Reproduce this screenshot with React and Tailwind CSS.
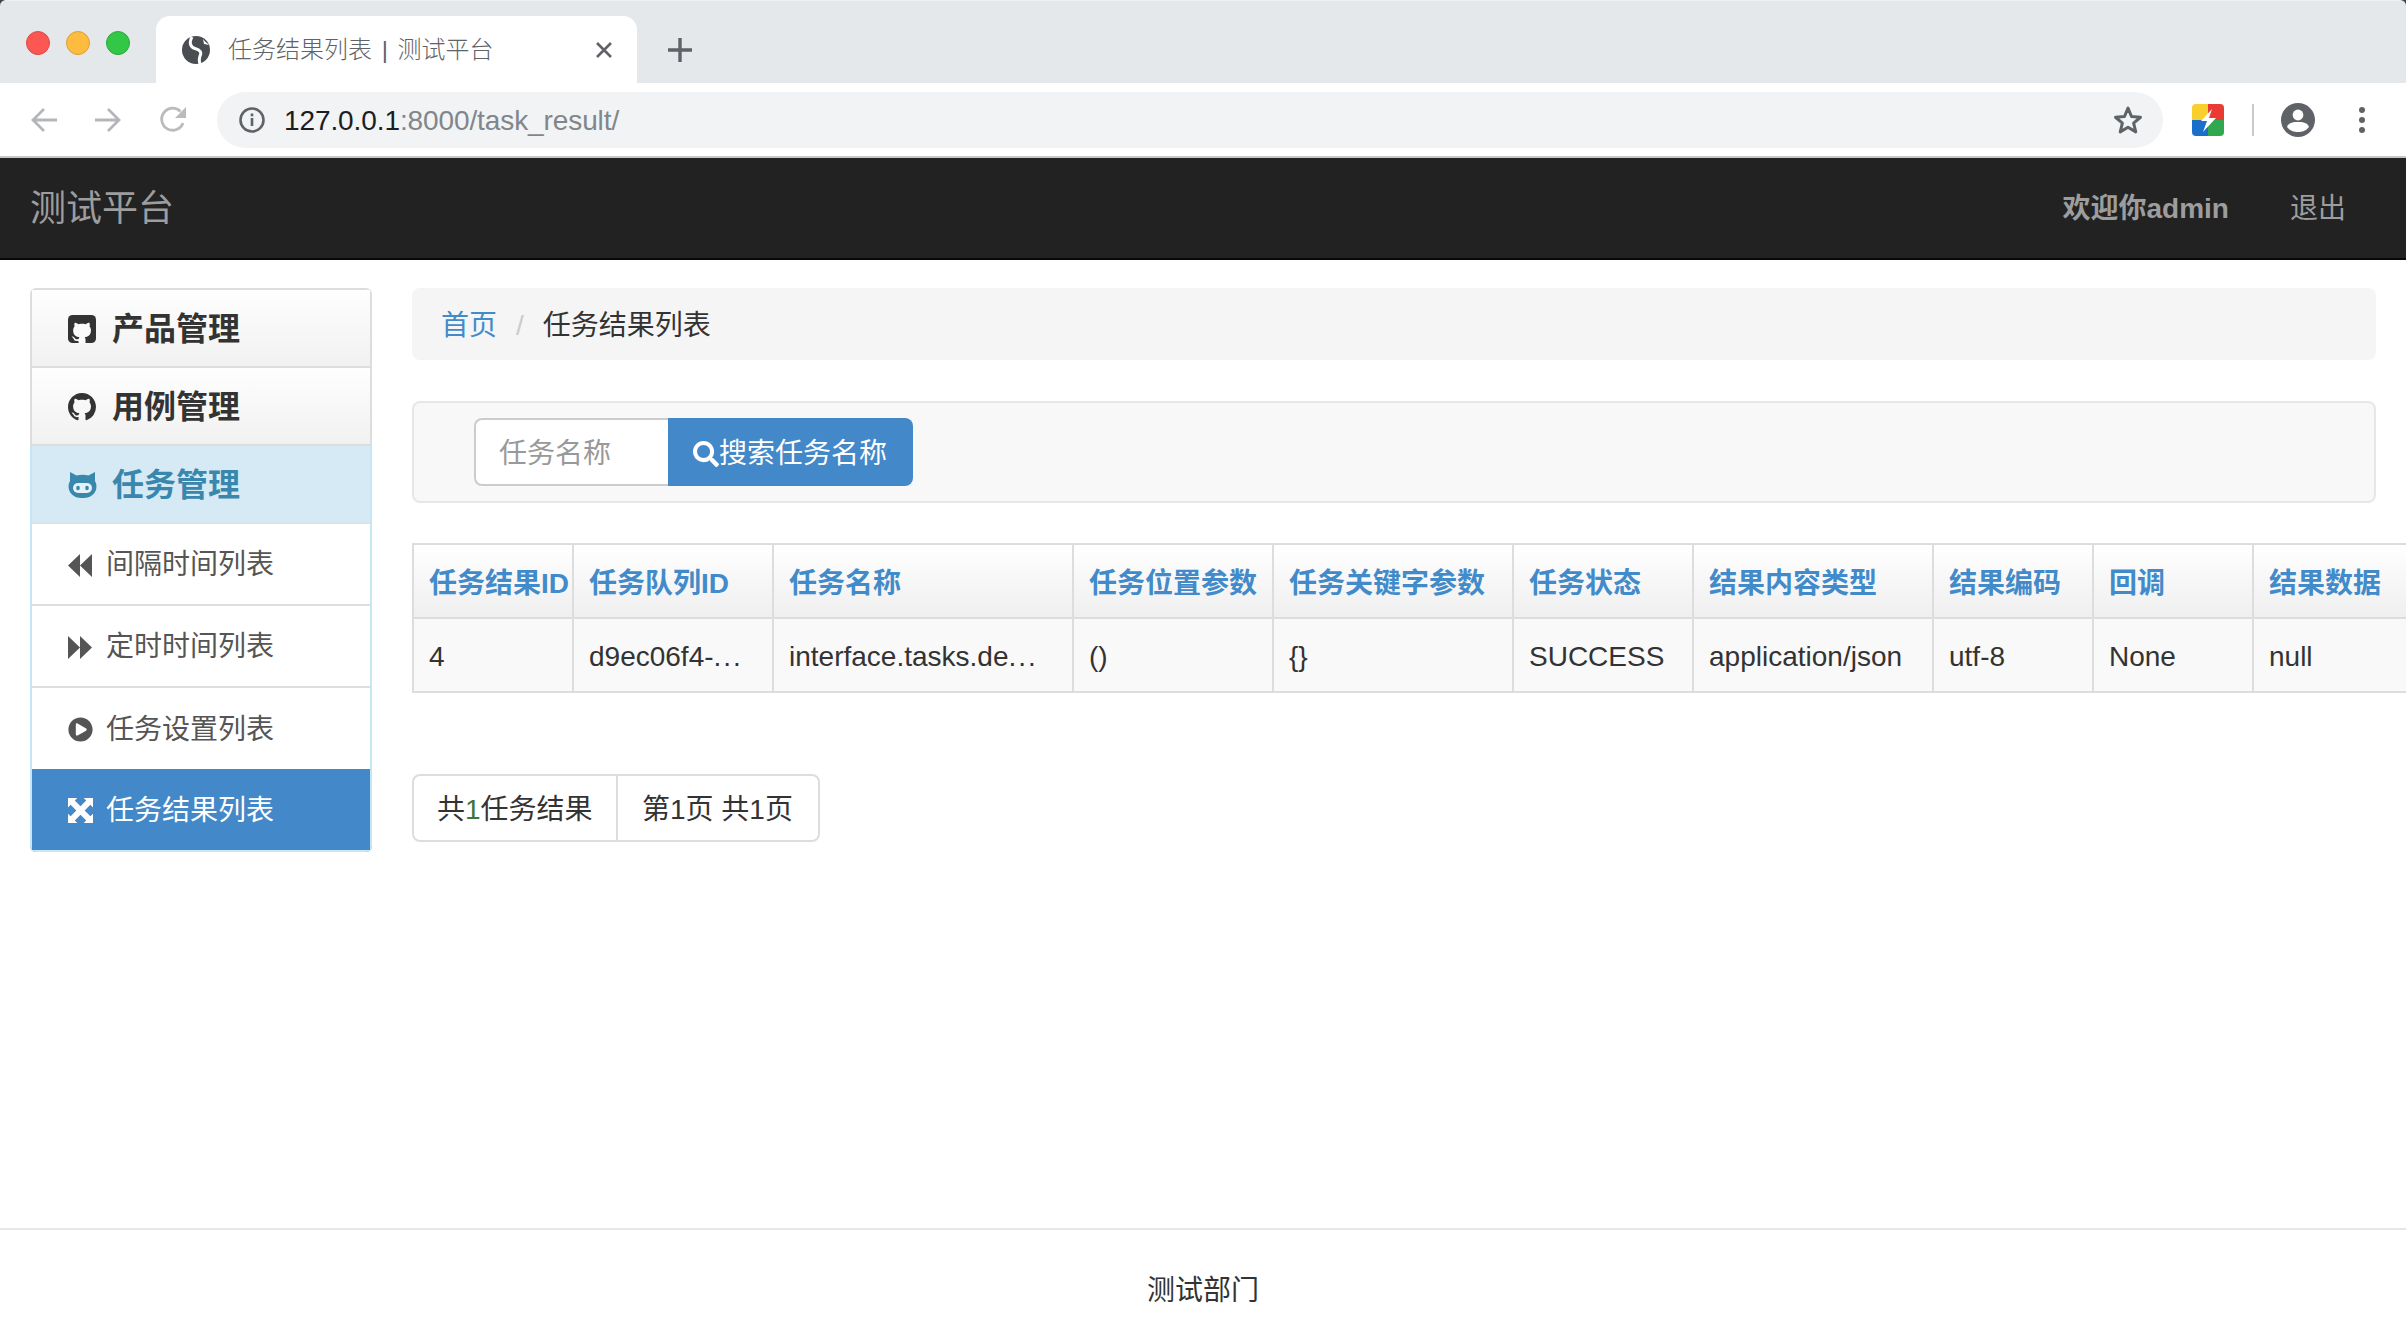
import React from "react";
import { FaPlayCircle, FaSearch } from "react-icons/fa";

const MARK = "M8 0C3.58 0 0 3.58 0 8c0 3.54 2.29 6.53 5.47 7.59.4.07.55-.17.55-.38 0-.19-.01-.82-.01-1.49-2.01.37-2.53-.49-2.69-.94-.09-.23-.48-.94-.82-1.13-.28-.15-.68-.52-.01-.53.63-.01 1.08.58 1.23.82.72 1.21 1.87.87 2.33.66.07-.52.28-.87.51-1.07-1.78-.2-3.64-.89-3.64-3.95 0-.87.31-1.59.82-2.15-.08-.2-.36-1.02.08-2.12 0 0 .67-.21 2.2.82.64-.18 1.32-.27 2-.27.68 0 1.36.09 2 .27 1.53-1.04 2.2-.82 2.2-.82.44 1.1.16 1.92.08 2.12.51.56.82 1.28.82 2.15 0 3.07-1.87 3.75-3.65 3.95.29.25.54.73.54 1.48 0 1.07-.01 1.93-.01 2.2 0 .21.15.46.55.38A8.013 8.013 0 0016 8c0-4.42-3.58-8-8-8z";
const CAT = "M6.02 16v-1.17c-2.01.37-2.53-.49-2.69-.94-.09-.23-.48-.94-.82-1.13-.28-.15-.68-.52-.01-.53.63-.01 1.08.58 1.23.82.72 1.21 1.87.87 2.33.66.07-.52.28-.87.51-1.07-1.78-.2-3.64-.89-3.64-3.95 0-.87.31-1.59.82-2.15-.08-.2-.36-1.02.08-2.12 0 0 .67-.21 2.2.82.64-.18 1.32-.27 2-.27.68 0 1.36.09 2 .27 1.53-1.04 2.2-.82 2.2-.82.44 1.1.16 1.92.08 2.12.51.56.82 1.28.82 2.15 0 3.07-1.87 3.75-3.65 3.95.29.25.54.73.54 1.48 0 1.07-.01 1.93-.01 2.2V16z";

function GithubSquare() {
  return (
    <svg viewBox="0 0 16 16" className="w-[28px] h-[28px]">
      <rect width="16" height="16" rx="2.6" fill="currentColor" />
      <path d={CAT} fill="#fbfbfb" />
    </svg>
  );
}

function GithubMark() {
  return (
    <svg viewBox="0 0 16 16" className="w-[28px] h-[28px]" fill="currentColor">
      <path d={MARK} />
    </svg>
  );
}

function GithubAlt() {
  return (
    <svg viewBox="0 0 29 27" className="w-[29px] h-[27px]">
      <path d="M2 10 L2 1 L8.5 4.5 C12 3.5 17 3.5 20.5 4.5 L27 1 L27 10 C29 13 29 18 27 21 C24 26 19 27 14.5 27 C10 27 5 26 2 21 C0 18 0 13 2 10Z" fill="currentColor" />
      <rect x="5" y="12" width="19" height="10" rx="5" fill="#e3f1f9" />
      <ellipse cx="10" cy="17" rx="1.8" ry="2.3" fill="currentColor" />
      <ellipse cx="19" cy="17" rx="1.8" ry="2.3" fill="currentColor" />
    </svg>
  );
}

function Backward() {
  return (
    <svg viewBox="0 0 24 23" className="w-[24px] h-[23px]" fill="currentColor">
      <path d="M24 0 L12 11.5 L24 23Z M12 0 L0 11.5 L12 23Z" />
    </svg>
  );
}

function Forward() {
  return (
    <svg viewBox="0 0 24 23" className="w-[24px] h-[23px]" fill="currentColor">
      <path d="M0 0 L12 11.5 L0 23Z M12 0 L24 11.5 L12 23Z" />
    </svg>
  );
}

function Fullscreen() {
  return (
    <svg viewBox="0 0 24 24" className="w-[25px] h-[25px]" fill="currentColor">
      <path d="M0 0H9L6.5 2.5 12 8 17.5 2.5 15 0H24V9L21.5 6.5 16 12 21.5 17.5 24 15V24H15L17.5 21.5 12 16 6.5 21.5 9 24H0V15L2.5 17.5 8 12 2.5 6.5 0 9Z" />
    </svg>
  );
}

function Favicon() {
  return (
    <svg viewBox="0 0 28 28" className="w-[28px] h-[28px] shrink-0">
      <circle cx="14" cy="14" r="14" fill="#4a4d52" />
      <path d="M10 1 C7 6 8 11 13 12.5 C18 14 20 16 18 20 C17 23 17 25 18 28" fill="none" stroke="#fff" strokeWidth="3" />
      <path d="M21 3 C22 5 24 6 27 9 L22 8Z" fill="#fff" />
    </svg>
  );
}

function TabStrip() {
  return (
    <div className="h-[83px] bg-[#e5e8eb] flex items-end shrink-0 border-t border-[#eef0f2] rounded-t-[6px]">
      <div className="flex items-center gap-[16px] pl-[26px] h-[82px] pt-[2px]">
        <span className="w-[24px] h-[24px] rounded-full bg-[#fc5753] border border-[#df4744]" />
        <span className="w-[24px] h-[24px] rounded-full bg-[#fdbc40] border border-[#de9f34]" />
        <span className="w-[24px] h-[24px] rounded-full bg-[#33c748] border border-[#27aa35]" />
      </div>
      <div className="ml-[26px] w-[481px] h-[67px] bg-white rounded-t-[14px] flex items-center pl-[26px] relative">
        <Favicon />
        <span className="ml-[18px] text-[24px] leading-[28px] text-[#5f6368] font-light whitespace-nowrap [word-spacing:3px]">任务结果列表 | 测试平台</span>
        <svg viewBox="0 0 18 18" className="absolute left-[439px] top-[25px] w-[18px] h-[18px]" stroke="#5f6368" strokeWidth="2.6" fill="none">
          <path d="M2 2 L16 16 M16 2 L2 16" />
        </svg>
      </div>
      <div className="h-[67px] flex items-center ml-[31px]">
        <svg viewBox="0 0 24 24" className="w-[24px] h-[24px]" stroke="#5f6368" strokeWidth="3.4" fill="none">
          <path d="M12 0 V24 M0 12 H24" />
        </svg>
      </div>
    </div>
  );
}

function Toolbar() {
  return (
    <div className="h-[75px] bg-white flex items-center shrink-0 border-b-2 border-[#c6c6c6]">
      <div className="flex items-center pl-[31px] w-[217px] gap-[38px] shrink-0">
        <svg viewBox="0 0 26 26" className="w-[26px] h-[26px]" stroke="#b4b6b9" strokeWidth="2.8" fill="none">
          <path d="M26 13 H3 M13 2 L2 13 L13 24" />
        </svg>
        <svg viewBox="0 0 26 26" className="w-[26px] h-[26px]" stroke="#b4b6b9" strokeWidth="2.8" fill="none">
          <path d="M0 13 H23 M13 2 L24 13 L13 24" />
        </svg>
        <svg viewBox="0 0 28 28" className="w-[28px] h-[28px]" fill="none">
          <path d="M24 17 A11 11 0 1 1 21.5 5.5" stroke="#b9bbbe" strokeWidth="2.8" />
          <path d="M27 1 V12 H16Z" fill="#b9bbbe" />
        </svg>
      </div>
      <div className="w-[1946px] h-[56px] rounded-full bg-[#f1f3f4] flex items-center pl-[22px] pr-[20px] shrink-0">
        <svg viewBox="0 0 26 26" className="w-[26px] h-[26px] shrink-0" fill="none">
          <circle cx="13" cy="13" r="11.5" stroke="#5f6368" strokeWidth="2.6" />
          <rect x="11.7" y="11" width="2.6" height="8" fill="#5f6368" />
          <rect x="11.7" y="6.5" width="2.6" height="2.8" fill="#5f6368" />
        </svg>
        <span className="ml-[19px] mt-[2px] text-[28px] tracking-[-0.1px] whitespace-nowrap text-[#1c1d1f]">127.0.0.1<span className="text-[#80868b]">:8000/task_result/</span></span>
        <svg viewBox="0 0 24 24" className="w-[30px] h-[30px] ml-auto" fill="none" stroke="#5f6368" strokeWidth="2.4" strokeLinejoin="round">
          <path d="M12 2.5 L14.8 9.2 L22 9.8 L16.5 14.5 L18.2 21.5 L12 17.8 L5.8 21.5 L7.5 14.5 L2 9.8 L9.2 9.2Z" />
        </svg>
      </div>
      <svg viewBox="0 0 32 32" className="w-[32px] h-[32px] ml-[29px] shrink-0">
        <defs>
          <clipPath id="ext"><rect width="32" height="32" rx="4" /></clipPath>
        </defs>
        <g clipPath="url(#ext)">
          <rect width="16" height="16" fill="#f8cf2c" />
          <rect x="16" width="16" height="16" fill="#e93a33" />
          <rect y="16" width="16" height="16" fill="#1a6fc9" />
          <rect x="16" y="16" width="16" height="16" fill="#2fa84f" />
          <path d="M20 5 L9 17 H15 L11 28 L24 14 H17Z" fill="#fff" />
        </g>
      </svg>
      <div className="w-[2px] h-[32px] bg-[#c8cacc] ml-[28px] shrink-0" />
      <svg viewBox="0 0 34 34" className="w-[34px] h-[34px] ml-[27px] shrink-0">
        <circle cx="17" cy="17" r="17" fill="#5f6368" />
        <circle cx="17" cy="12" r="5.4" fill="#fff" />
        <path d="M6 24 C8 19 13 19 17 19 C21 19 26 19 28 24 C25 28 21 29 17 29 C13 29 9 28 6 24Z" fill="#fff" />
      </svg>
      <div className="flex flex-col gap-[4px] ml-[44px] shrink-0">
        <span className="w-[6px] h-[6px] rounded-full bg-[#5f6368]" />
        <span className="w-[6px] h-[6px] rounded-full bg-[#5f6368]" />
        <span className="w-[6px] h-[6px] rounded-full bg-[#5f6368]" />
      </div>
    </div>
  );
}

function Navbar() {
  return (
    <div className="h-[102px] bg-[#222222] border-b-2 border-[#080808] flex items-center justify-between pl-[30px] pr-[60px] pt-[1px] shrink-0">
      <span className="text-[36px] text-[#9d9d9d]">测试平台</span>
      <div className="flex items-center gap-[61px] text-[28px] text-[#9d9d9d]">
        <span className="font-bold">欢迎你admin</span>
        <span>退出</span>
      </div>
    </div>
  );
}

function Heading({ icon, children, active, first }) {
  const base = "h-[78px] flex items-center pl-[36px] pt-[1px] border-b-2 font-bold text-[32px] ";
  const tone = active
    ? "bg-[#d6eaf6] text-[#3a87ad] border-x-2 border-x-[#c5e6f4] border-b-[#d7e4ec]"
    : "bg-gradient-to-b from-[#fefefe] to-[#f1f1f1] text-[#333333] border-x-2 border-[#dddddd]";
  return (
    <div className={base + tone + (first ? " border-t-2 h-[80px]" : "")}>
      <span className="w-[44px] flex items-center">{icon}</span>
      {children}
    </div>
  );
}

function SubItem({ icon, children, active, last }) {
  const base = "flex items-center pl-[36px] pt-[2px] text-[28px] border-x-2 ";
  const tone = active
    ? "h-[83px] bg-[#4388c8] text-white border-x-[#c5e6f4] border-b-2 border-b-[#c5e9f6]"
    : last
      ? "h-[81px] bg-white text-[#555555] border-x-[#c5e6f4]"
      : "h-[82px] bg-white text-[#555555] border-x-[#c5e6f4] border-b-2 border-b-[#dddddd]";
  return (
    <div className={base + tone}>
      <span className="w-[38px] flex items-center text-[25px]">{icon}</span>
      {children}
    </div>
  );
}

function Sidebar() {
  return (
    <div className="w-[342px] shrink-0 self-start rounded-[6px] overflow-hidden">
      <Heading icon={<GithubSquare />} first>产品管理</Heading>
      <Heading icon={<GithubMark />}>用例管理</Heading>
      <Heading icon={<GithubAlt />} active>任务管理</Heading>
      <SubItem icon={<Backward />}>间隔时间列表</SubItem>
      <SubItem icon={<Forward />}>定时时间列表</SubItem>
      <SubItem icon={<FaPlayCircle />} last>任务设置列表</SubItem>
      <SubItem icon={<Fullscreen />} active>任务结果列表</SubItem>
    </div>
  );
}

const dots = <span className="tracking-[2px]">...</span>;

const columns = [
  ["任务结果ID", "4", "w-[160px]"],
  ["任务队列ID", <>d9ec06f4-{dots}</>, "w-[200px]"],
  ["任务名称", <>interface.tasks.de{dots}</>, "w-[300px]"],
  ["任务位置参数", "()", "w-[200px]"],
  ["任务关键字参数", "{}", "w-[240px]"],
  ["任务状态", "SUCCESS", "w-[180px]"],
  ["结果内容类型", "application/json", "w-[240px]"],
  ["结果编码", "utf-8", "w-[160px]"],
  ["回调", "None", "w-[160px]"],
  ["结果数据", "null", "w-[160px]"],
];

function ResultTable() {
  return (
    <div className="mt-[40px] mr-[-30px] overflow-hidden">
      <table className="table-fixed w-[2000px] border-collapse text-[28px]">
        <thead>
          <tr>
            {columns.map(([h, , w]) => (
              <th key={h} className={`${w} h-[74px] border-2 border-[#dddddd] bg-gradient-to-b from-[#ffffff] to-[#efefef] pl-[15px] pt-[6px] text-left font-bold text-[#428bca] whitespace-nowrap`}>{h}</th>
            ))}
          </tr>
        </thead>
        <tbody>
          <tr>
            {columns.map(([h, v]) => (
              <td key={h} className="h-[74px] border-2 border-[#dddddd] bg-[#f9f9f9] pl-[15px] pt-[3px] text-[#333333] whitespace-nowrap">{v}</td>
            ))}
          </tr>
        </tbody>
      </table>
    </div>
  );
}

export default function App() {
  return (
    <div className="w-[2406px] h-[1338px] overflow-hidden bg-[#444444] flex flex-col" style={{ fontFamily: '"Liberation Sans", "Noto Sans CJK SC", sans-serif' }}>
      <TabStrip />
      <Toolbar />
      <Navbar />
      <div className="flex-1 flex gap-[40px] pt-[28px] pl-[30px] pr-[30px] min-h-0 bg-white">
        <Sidebar />
        <div className="flex-1 min-w-0">
          <div className="h-[72px] bg-[#f5f5f5] rounded-[8px] flex items-center pl-[29px] pt-[3px] text-[28px]">
            <span className="text-[#428bca]">首页</span>
            <span className="text-[#cccccc] mx-[19px]">/</span>
            <span className="text-[#333333]">任务结果列表</span>
          </div>
          <div className="mt-[41px] h-[102px] bg-[#f8f8f8] border-2 border-[#e7e7e7] rounded-[8px] flex items-center pl-[60px] text-[28px]">
            <div className="w-[194px] h-[68px] bg-white border-2 border-[#cccccc] border-r-0 rounded-l-[8px] flex items-center pl-[23px] pt-[3px] text-[#999999]">任务名称</div>
            <div className="w-[245px] h-[68px] bg-[#4388c8] rounded-r-[8px] flex items-center pl-[25px] pt-[3px] text-white">
              <FaSearch className="text-[26px]" />
              <span>搜索任务名称</span>
            </div>
          </div>
          <ResultTable />
          <div className="mt-[81px] inline-flex h-[68px] bg-white border-2 border-[#dddddd] rounded-[8px] text-[28px] text-[#333333] items-center">
            <span className="w-[204px] h-full flex items-center pl-[23px] pt-[3px] border-r-2 border-[#dddddd]">共<span className="text-[#3c763d]">1</span>任务结果</span>
            <span className="w-[200px] h-full flex items-center pl-[24px] pt-[3px]">第1页 共1页</span>
          </div>
        </div>
      </div>
      <div className="h-[110px] border-t-2 border-[#e7e7e7] bg-white flex items-start justify-center pt-[40px] text-[28px] text-[#333333] shrink-0">测试部门</div>
    </div>
  );
}
